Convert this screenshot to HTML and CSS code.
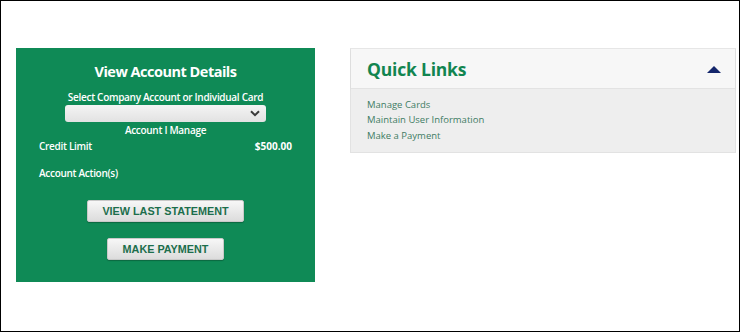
FILE: index.html
```html
<!DOCTYPE html>
<html>
<head>
<meta charset="utf-8">
<link rel="stylesheet" href="styles.css">
</head>
<body>
<div class="frame">
  <section class="account">
    <h2 class="account-title">View Account Details</h2>
    <div class="select-label">Select Company Account or Individual Card</div>
    <div class="select-box">
      <svg class="chevron" width="10" height="7" viewBox="0 0 10 7"><path d="M1 1.2 L5 5.2 L9 1.2" fill="none" stroke="#3a3a3a" stroke-width="2"/></svg>
    </div>
    <div class="manage-label">Account I Manage</div>
    <div class="row">
      <span>Credit Limit</span>
      <span class="amount">$500.00</span>
    </div>
    <div class="actions-label">Account Action(s)</div>
    <div class="buttons">
      <button class="btn btn-wide">VIEW LAST STATEMENT</button>
      <button class="btn btn-narrow">MAKE PAYMENT</button>
    </div>
  </section>
  <section class="quick">
    <div class="quick-head">
      <h2 class="quick-title">Quick Links</h2>
      <span class="caret"></span>
    </div>
    <ul class="quick-list">
      <li><a href="#">Manage Cards</a></li>
      <li><a href="#">Maintain User Information</a></li>
      <li><a href="#">Make a Payment</a></li>
    </ul>
  </section>
</div>
</body>
</html>
```

FILE: styles.css
```css
* { box-sizing: border-box; }
html, body { margin: 0; padding: 0; background: #fff; }
body { font-family: "Open Sans", "Liberation Sans", sans-serif; }

.frame {
  width: 740px;
  height: 332px;
  border: 1px solid #000;
  padding: 47px 0 0 15px;
  display: flex;
  align-items: flex-start;
}

.account {
  width: 299px;
  height: 234px;
  background: #0f8a56;
  color: #fff;
  display: flex;
  flex-direction: column;
  align-items: center;
  padding-top: 13px;
}

.account-title {
  margin: 0;
  font-size: 14.5px;
  line-height: 22px;
  font-weight: 700;
  letter-spacing: -0.5px;
}

.select-label {
  margin-top: 7px;
  font-size: 10px;
  line-height: 14px;
  font-weight: 600;
  letter-spacing: -0.3px;
}

.select-box {
  margin-top: 1px;
  width: 201px;
  height: 17px;
  border-radius: 3px;
  background: linear-gradient(#f4f4f4, #e2e2e2);
  display: flex;
  align-items: center;
  justify-content: flex-end;
  padding-right: 6px;
}

.manage-label {
  margin-top: 1px;
  font-size: 10px;
  line-height: 14px;
  font-weight: 600;
  letter-spacing: -0.3px;
}

.row {
  align-self: stretch;
  display: flex;
  justify-content: space-between;
  padding: 0 23px 0 23px;
  margin-top: 2px;
  font-size: 10px;
  line-height: 14px;
  font-weight: 600;
  letter-spacing: -0.3px;
}

.amount { font-weight: 700; letter-spacing: 0; }

.actions-label {
  align-self: stretch;
  padding-left: 23px;
  margin-top: 13px;
  font-size: 10px;
  line-height: 14px;
  font-weight: 600;
  letter-spacing: -0.3px;
}

.buttons {
  display: flex;
  flex-direction: column;
  align-items: center;
  gap: 16px;
  margin-top: 20px;
}

.btn {
  font-family: "Liberation Sans", Arial, sans-serif;
  font-weight: 700;
  font-size: 10.8px;
  color: #1c6e4c;
  height: 22px;
  padding: 0;
  border: 1px solid #c9c9c9;
  border-radius: 2px;
  background: linear-gradient(#f7f7f7, #dcdcdc);
  box-shadow: 0 1px 1px rgba(0,0,0,0.25);
}
.btn-wide { width: 157px; }
.btn-narrow { width: 117px; }

.quick {
  margin-left: 35px;
  width: 386px;
  border: 1px solid #e2e2e2;
  border-top-color: #e6e6e6;
}

.quick-head {
  height: 40px;
  background: #f7f7f7;
  border-bottom: 1px solid #e3e3e3;
  display: flex;
  align-items: center;
  justify-content: space-between;
  padding: 0 14px 0 16px;
  box-shadow: 0 1px 2px rgba(0,0,0,0.05);
}

.quick-title {
  margin: 0;
  font-size: 17.5px;
  line-height: 26px;
  font-weight: 700;
  color: #128550;
  letter-spacing: -0.2px;
}

.caret {
  width: 0;
  height: 0;
  border-left: 7.5px solid transparent;
  border-right: 7.5px solid transparent;
  border-bottom: 7px solid #14266b;
  margin-top: 1px;
}

.quick-list {
  list-style: none;
  margin: 0;
  padding: 8px 16px 9px;
  background: #eeeeee;
  height: 63px;
}
.quick-list li {
  font-size: 9.5px;
  line-height: 15.3px;
}
.quick-list a {
  color: #3e7c64;
  text-decoration: none;
}
```
